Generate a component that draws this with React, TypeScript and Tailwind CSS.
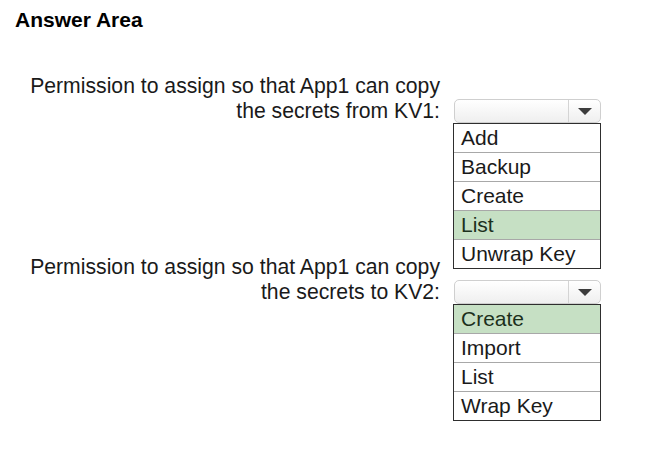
import React from 'react'

interface Question {
  lines: string[]
  options: string[]
  selected: string
}

const questions: Question[] = [
  {
    lines: ['Permission to assign so that App1 can copy', 'the secrets from KV1:'],
    options: ['Add', 'Backup', 'Create', 'List', 'Unwrap Key'],
    selected: 'List',
  },
  {
    lines: ['Permission to assign so that App1 can copy', 'the secrets to KV2:'],
    options: ['Create', 'Import', 'List', 'Wrap Key'],
    selected: 'Create',
  },
]

function Dropdown({ options, selected }: { options: string[]; selected: string }) {
  return (
    <div className="relative mt-[26px] w-[147px]">
      {/* closed select box */}
      <div className="flex h-[24px] rounded-[5px] border border-[#cfcfcf] bg-gradient-to-b from-white to-[#efefef]">
        <div className="flex-1" />
        <div className="flex w-[32px] items-center justify-center border-l border-[#d4d4d4]">
          <svg width="14" height="7" viewBox="0 0 14 7">
            <polygon points="0,0 14,0 7,7" fill="#3c3c3c" />
          </svg>
        </div>
      </div>
      {/* open option list */}
      <ul className="absolute left-[-1px] top-[24px] w-[148px] border border-[#2e2e2e] bg-white">
        {options.map((opt, i) => (
          <li
            key={opt}
            className={`h-[28px] pl-[7px] text-[21px] leading-[28px] ${
              i > 0 ? 'border-t border-[#a8a8a8] box-content' : ''
            } ${opt === selected ? 'bg-[#c6e0c4] text-[#1c301c]' : 'text-[#1a1a1a]'}`}
          >
            {opt}
          </li>
        ))}
      </ul>
    </div>
  )
}

export default function App() {
  return (
    <div
      className="h-[476px] w-[647px] bg-white text-[#1a1a1a]"
      style={{ fontFamily: '"Liberation Sans", Arial, sans-serif' }}
    >
      <h1 className="pl-[15px] pt-[7px] text-[21px] font-bold leading-[25px] text-black">Answer Area</h1>
      <div className="mt-[41px] flex flex-col gap-[131px]">
        {questions.map((q, i) => (
          <div key={i} className="flex items-start">
            <div className="w-[440px] text-right text-[21.2px] leading-[25px]">
              {q.lines.map((l) => (
                <div key={l}>{l}</div>
              ))}
            </div>
            <div className="ml-[14px]">
              <Dropdown options={q.options} selected={q.selected} />
            </div>
          </div>
        ))}
      </div>
    </div>
  )
}
